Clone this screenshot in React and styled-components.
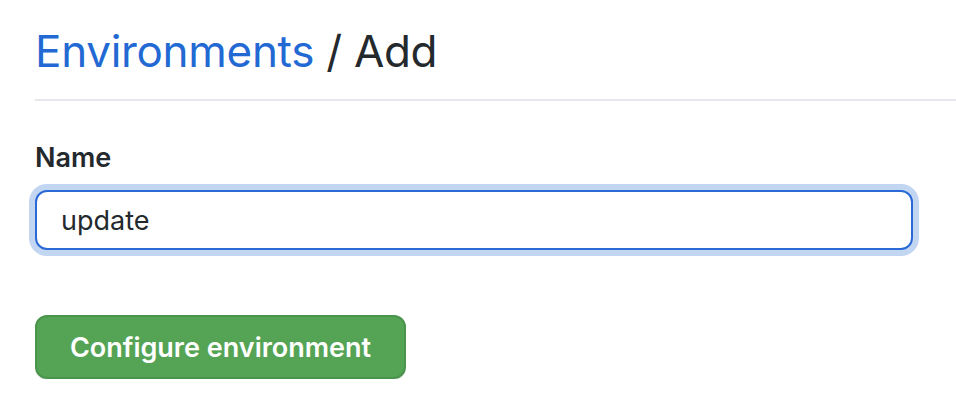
import React from 'react';
import styled, { createGlobalStyle } from 'styled-components';

const GlobalStyle = createGlobalStyle`
  html, body {
    margin: 0;
    padding: 0;
    background: #fff;
  }
  body {
    font-family: Inter, "Noto Sans", "Liberation Sans", sans-serif;
    color: #24292e;
  }
`;

const Page = styled.main`
  padding: 22px 0 0 35px;
  width: 956px;
  box-sizing: border-box;
`;

const Header = styled.h1`
  margin: 0;
  padding-bottom: 19px;
  border-bottom: 2px solid #e5e7ea;
  font-size: 44px;
  font-weight: 400;
  line-height: 58px;
  letter-spacing: -0.3px;
  color: #24292e;
`;

const Crumb = styled.a`
  color: #2269d4;
  text-decoration: none;
`;

const Form = styled.form`
  padding-top: 40px;
  padding-right: 43px;
  display: flex;
  flex-direction: column;
`;

const Label = styled.label`
  font-size: 27px;
  font-weight: 600;
  line-height: 34px;
  color: #24292e;
`;

const Input = styled.input`
  margin-top: 15px;
  height: 60px;
  box-sizing: border-box;
  border: 2px solid #2a6ad6;
  border-radius: 12px;
  box-shadow: 0 0 0 6px #c2d5f1;
  padding: 0 24px;
  font-family: inherit;
  font-size: 27px;
  color: #24292e;
  outline: none;
  caret-color: #24292e;
`;

const Actions = styled.div`
  margin-top: 65px;
`;

const Button = styled.button`
  height: 64px;
  width: 371px;
  border: 2px solid #4b944c;
  border-radius: 12px;
  background: #55a456;
  color: #fff;
  font-family: inherit;
  font-size: 27px;
  font-weight: 600;
  cursor: pointer;
  box-shadow: 0 1px 0 rgba(27, 31, 35, 0.08);
`;

export default function App() {
  return (
    <>
      <GlobalStyle />
      <Page>
        <Header>
          <Crumb href="#">Environments</Crumb> / Add
        </Header>
        <Form onSubmit={(e) => e.preventDefault()}>
          <Label htmlFor="env-name">Name</Label>
          <Input id="env-name" defaultValue="update" autoFocus />
          <Actions>
            <Button type="submit">Configure environment</Button>
          </Actions>
        </Form>
      </Page>
    </>
  );
}
